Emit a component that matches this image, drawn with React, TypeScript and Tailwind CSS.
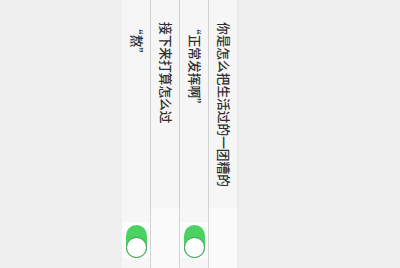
const rows = [
  { label: "“熬”", toggle: true },
  { label: "接下来打算怎么过", toggle: false },
  { label: "“正常发挥啊”", toggle: true },
  { label: "你是怎么把生活过的一团糟的", toggle: false },
];

function Toggle() {
  // on-state switch, turned on its side: knob sits at the bottom
  return (
    <div className="relative h-[33px] w-[21px] rounded-full bg-[#4cd263]">
      <div className="absolute bottom-0 left-0 h-[21px] w-[21px] rounded-full border border-[#3d9a50] bg-white" />
    </div>
  );
}

export default function App() {
  return (
    <div className="flex h-[268px] w-[400px] bg-[#efefef] pl-[122px] font-['Noto_Sans_CJK_SC',sans-serif]">
      {rows.map((row, i) => (
        <div
          key={i}
          className={`flex h-full w-[29px] flex-col items-center justify-between bg-[#f6f6f6] ${
            i === rows.length - 1 ? "border-r border-[#f3e3e6]" : "border-r border-[#d2d2d2]"
          }`}
        >
          <span className="pl-[1px] pt-[22px] text-[12.7px] font-medium leading-none text-[#2e2e2e] [text-orientation:sideways] [writing-mode:vertical-rl]">
            {row.label}
          </span>
          {row.toggle ? (
            <div className="mb-[10px] flex w-full justify-center bg-[#fcfcfc] pt-[3px]">
              <Toggle />
            </div>
          ) : (
            <div className="h-[60px] w-full bg-[#fafafa]" />
          )}
        </div>
      ))}
    </div>
  );
}
